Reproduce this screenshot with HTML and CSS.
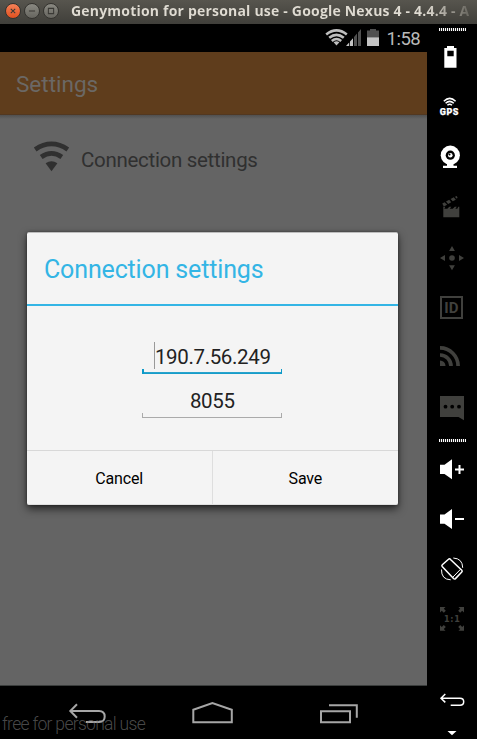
FILE: index.html
```html
<!DOCTYPE html>
<html lang="en">
<head>
<meta charset="utf-8">
<title>Genymotion</title>
<link rel="stylesheet" href="styles.css">
</head>
<body>
<header class="titlebar">
  <span class="win win-close"><svg viewBox="0 0 16 16"><path d="M5.5 5.5l5 5M10.5 5.5l-5 5"/></svg></span>
  <span class="win"><svg viewBox="0 0 16 16"><path d="M4.5 8h7"/></svg></span>
  <span class="win"><svg viewBox="0 0 16 16"><path d="M5 5h6v6H5z"/></svg></span>
  <span class="win-title">Genymotion for personal use - Google Nexus 4 - 4.4.4 - A</span>
</header>
<div class="main">
  <div class="device">
    <div class="status">
      <svg class="st-icons" viewBox="0 0 56 20">
        <g fill="none" stroke="#bebebe" stroke-width="2.6"><path d="M1.2 6.4Q11.5 -1.8 21.8 6.4"/><path d="M4.2 9.8Q11.5 3.8 18.8 9.8"/><path d="M6.8 13Q11.5 9 16.200 13"/></g>
        <path fill="#bebebe" d="M8.600 14.200Q11.500 12.200 14.400 14.200L11.500 17.600z"/>
        <path fill="#c4c4c4" d="M21 18L24.200 14.400V18zM25 13.600L28 10.200V18H25z"/>
        <path fill="#505050" d="M29 9L32 5.400V18H29zM33 4.400L36 1V18H33z"/>
        <path fill="#505050" d="M42 2.400h3V1h6v1.400h3V9.500H42z"/><path fill="#c4c4c4" d="M42 9.300h12V18H42z"/>
      </svg>
      <span class="clock">1:58</span>
    </div>
    <div class="actionbar"><span>Settings</span></div>
    <div class="content">
      <div class="row">
        <svg class="row-icon" viewBox="0 0 38 32"><g fill="none" stroke="#303030" stroke-width="4.800"><path d="M2.200 8.400Q18.500 -2.600 34.800 8.400"/><path d="M8.200 16Q18.500 8.800 28.800 16"/></g><path fill="#303030" d="M12.600 22.300Q18.500 18.300 24.400 22.300L18.500 30.300z"/></svg>
        <span class="row-text">Connection settings</span>
      </div>
      <section class="dialog">
        <h1 class="dlg-title"><span>Connection settings</span></h1>
        <div class="fields">
          <div class="field active"><i class="caret"></i><span>190.7.56.249</span></div>
          <div class="field"><span>8055</span></div>
        </div>
        <div class="buttons"><div class="btn">Cancel</div><div class="btn">Save</div></div>
      </section>
    </div>
    <nav class="nav">
      <svg class="n-back" viewBox="68 0 38 54"><path d="M77 19.3L70.3 26L77 32.7M70.3 26H99Q104.7 26 104.7 31.5Q104.7 37 99 37H86"/></svg>
      <svg class="n-home" viewBox="192 0 42 54"><path d="M193.3 24.8L212.4 18L231.8 24.8V37.3H193.3z"/></svg>
      <svg class="n-recent" viewBox="319 0 40 54"><path d="M321 26.2H350V37.2H321zM329 20.3H356.8V32.7"/></svg>
      <span class="watermark">free for personal use</span>
    </nav>
  </div>
  <aside class="tools">
    <div class="grip first"></div>
    <svg class="tool" viewBox="0 0 50 50"><path fill-rule="evenodd" d="M20 15h7v2h2.5v19.7H17.3V17H20zM20.3 19.7v5.6h6.4v-5.6z"/></svg>
    <svg class="tool" viewBox="0 0 50 50"><g class="line"><path d="M16.8 20.2Q22.7 14.6 28.6 20.2M18.6 22.3Q22.7 18.4 26.8 22.3M20.4 24.3Q22.7 22.2 25 24.3"/></g><text class="gps" x="12.8" y="34">GPS</text></svg>
    <svg class="tool" viewBox="0 0 50 50"><circle cx="23.3" cy="24.2" r="9.6"/><path d="M20 32h6.500v2.700H30v2.200H16v-2.200h4z"/><circle cx="23.300" cy="24.200" r="4.600" fill="#000"/><circle cx="23.300" cy="24.200" r="2.300"/><circle cx="22.500" cy="23.400" r="1" fill="#000"/></svg>
    <svg class="tool off" viewBox="0 0 50 50"><path d="M16.300 25.700h2l-1 2h3l2-2h2l-1.500 2h3l2-2h2l-1.500 2h2l1-2h1v10.600H16.300z"/><path d="M15.300 22.500l2.300-1.200 2.600 2.400-3.400 1.800zM19 20.400l3.200-1.700 2 2.600-3 1.600zM23.600 18l3.200-1.700 2 2.400-3 1.600zM28 15.800l1.800-.9.8 2-1.300.7z"/></svg>
    <svg class="tool off" viewBox="0 0 50 50"><circle cx="25" cy="27" r="2.800"/><path d="M25 15l2.900 5h-5.800zM25 39.300l2.900-5h-5.800zM13 27l5-3v6zM37 27l-5-3v6z"/></svg>
    <svg class="tool off" viewBox="0 0 50 50"><path fill-rule="evenodd" d="M13 15h23v23H13zM15 17v19h19V17z"/><text class="id" x="17.300" y="32.200">ID</text></svg>
    <svg class="tool off" viewBox="0 0 50 50"><g fill="none" stroke="#40403d" stroke-width="3.700"><path d="M13 16.900A18.100 18.100 0 0 1 31.100 35M13 24A11 11 0 0 1 24 35"/></g><path d="M13 29.500A5.500 5.500 0 0 1 18.500 35H13z"/></svg>
    <svg class="tool off" viewBox="0 0 50 50"><path d="M13 15h24v24.300L31.500 36H13z"/><g fill="#000"><circle cx="18.500" cy="25.700" r="1.900"/><circle cx="25.200" cy="25.700" r="1.900"/><circle cx="32" cy="25.700" r="1.900"/></g></svg>
    <div class="grip second"></div>
    <svg class="tool" viewBox="0 0 50 50"><path d="M13 20.700h4.500L25 15.300v20l-7.500-5.300H13zM31.500 21h2v3.500H37v2h-3.500V30h-2v-3.500H28v-2h3.500z"/></svg>
    <svg class="tool" viewBox="0 0 50 50"><path d="M13 20.500h4.500L25 15v20l-7.500-5.300H13zM28 24h9v2h-9z"/></svg>
    <svg class="tool" viewBox="0 0 50 50"><g class="line"><path d="M21.500 15.300Q22.500 14.300 23.500 15.500L34.800 26.300Q35.600 27.200 34.800 28L28.500 34.600Q27.500 35.500 26.500 34.500L15.200 22.500Q14.500 21.500 15.300 20.800z"/><path d="M26 33L33.500 25.300" stroke-width="1"/></g><g class="line thin"><path d="M26.300 14Q35.500 14.500 35.700 23.800M14.500 25.500Q14.200 35.500 23.700 35.800"/></g></svg>
    <svg class="tool off" viewBox="0 0 50 50"><path d="M13 13h5.500l-1.700 1.700 2 2-2 2-2-2L13 18.500zM37 13h-5.500l1.700 1.700-2 2 2 2 2-2 1.800 1.800zM13 36.700h5.500L16.800 35l2-2-2-2-2 2-1.800-1.800zM37 36.700h-5.500l1.700-1.700-2-2 2-2 2 2 1.800-1.800z"/><text class="scale" x="17" y="28">1:1</text></svg>
    <svg class="tool back" viewBox="0 0 50 50"><g class="line"><path d="M18.300 19L14 23.200L18.300 27.400M14 23.200H33Q36.700 23.200 36.700 26.800Q36.700 30.300 33 30.300H23.700"/></g></svg>
    <svg class="more" viewBox="0 0 50 5"><path d="M20.500 0h9L25 4.300z"/></svg>
  </aside>
</div>
</body>
</html>
```

FILE: styles.css
```css
* { box-sizing: border-box; }
body { margin: 0; width: 477px; height: 739px; overflow: hidden; background: #000; font-family: Roboto, sans-serif; }
svg { display: block; flex: none; }
span { white-space: nowrap; }

.titlebar { height: 24px; padding: 0 0 3px 5px; display: flex; align-items: center; gap: 3px; background: linear-gradient(#57554e, #403f3a); overflow: hidden; }
.win { flex: none; width: 16px; height: 16px; border-radius: 50%; background: linear-gradient(#8a8982, #66655f); border: 1px solid #34332f; }
.win svg { width: 14px; height: 14px; fill: none; stroke: #3a3935; stroke-width: 1.2; }
.win-close { background: linear-gradient(#f58158, #e1501f); }
.win-title { flex: none; margin-left: 9px; font: bold 14px/20px "Open Sans", sans-serif; letter-spacing: 0.2px; background: linear-gradient(90deg, #dfdbd2 355px, #57554e 405px); background-clip: text; -webkit-background-clip: text; color: transparent; }

.main { display: flex; height: 715px; }
.device { width: 427px; display: flex; flex-direction: column; }
.status { height: 28px; display: flex; justify-content: flex-end; padding-right: 6.500px; }
.st-icons { width: 56px; height: 20px; margin: 4px 6px 0 0; }
.clock { font-size: 18.500px; line-height: 30px; letter-spacing: -.5px; color: #b9b9b9; width: 34px; }
.actionbar { height: 63px; padding-left: 16px; background: #5f3d1c; border-bottom: 1px solid #523821; color: #6b6865; font-size: 22.500px; line-height: 64px; }
.content { height: 571px; background: linear-gradient(#505050, #646464 4px); border-bottom: 1px solid #3a3d3c; }
.row { height: 117px; display: flex; padding-left: 33px; }
.row-icon { width: 38px; height: 32px; margin-top: 26px; }
.row-text { margin-left: 10px; font-size: 20.500px; letter-spacing: -.3px; line-height: 91px; color: #303030; }

.dialog { width: 371.500px; height: 273px; margin-left: 26.500px; display: flex; flex-direction: column; background: #f4f4f4; border-radius: 2px; border: solid #e0e0e0; border-width: 1px 0; border-top-color: #bdbdbd; box-shadow: 0 4px 9px rgba(0,0,0,.62), 0 0 3px rgba(0,0,0,.4); }
.dlg-title { margin: 0; height: 73px; padding-left: 17.500px; border-bottom: 2px solid #33b5e5; font-weight: 400; font-size: 25px; letter-spacing: -.15px; line-height: 74px; color: #33b5e5; }
.fields { flex: none; height: 144px; padding-top: 35px; display: flex; flex-direction: column; align-items: center; gap: 11px; }
.field { width: 140px; height: 33px; display: flex; justify-content: center; font-size: 20.500px; letter-spacing: -.35px; line-height: 33px; color: #222; background: linear-gradient(#aaa, #aaa) 0 100%/1px 5px no-repeat, linear-gradient(#aaa, #aaa) 100% 100%/1px 5px no-repeat, linear-gradient(#aaa, #aaa) 0 100%/100% 1px no-repeat; }
.field.active { background: linear-gradient(#0c9ac9, #0c9ac9) 0 100%/2px 5px no-repeat, linear-gradient(#0c9ac9, #0c9ac9) 100% 100%/1px 5px no-repeat, linear-gradient(#33a5cc, #0c9ac9) 0 100%/100% 2px no-repeat; }
.caret { width: 1px; height: 27px; margin-top: 1px; background: #999; }
.buttons { flex: 1; min-height: 0; display: flex; border-top: 1px solid #d8d8d8; }
.btn { flex: 1; height: 53px; text-align: center; font-size: 16px; letter-spacing: -.15px; line-height: 56px; color: #000; }
.btn + .btn { border-left: 1px solid #dedede; }

.nav { position: relative; height: 53px; display: flex; padding-left: 68px; }
.nav svg { height: 54px; margin-top: -1px; fill: none; stroke: #a6a6a6; stroke-width: 2; }
.n-back { width: 38px; }
.nav .n-home { width: 42px; margin-left: 86px; }
.nav .n-recent { width: 40px; margin-left: 85px; }
.watermark { position: absolute; left: 2px; top: 28px; font-size: 17.500px; letter-spacing: -.7px; line-height: 20px; font-weight: 300; color: rgba(120,120,120,.62); }

.tools { width: 50px; display: flex; flex-direction: column; fill: #fff; }
.grip { flex: none; width: 27px; height: 3px; margin-left: 12px; background: repeating-linear-gradient(90deg, #fff 0 1px, #222 1px 2px); }
.first { margin-top: 4px; }
.second { margin: 8px 0 2px 12px; }
.tool { width: 50px; height: 50px; }
.off { fill: #40403d; }
.line { fill: none; stroke: #fff; stroke-width: 1.500; }
.thin { stroke-width: 1; }
.gps { font: 900 9px Roboto, sans-serif; letter-spacing: .5px; stroke: #fff; stroke-width: .25; }
.id { font: bold 15px Roboto, sans-serif; }
.scale { font: bold 8px "DejaVu Sans", sans-serif; letter-spacing: .8px; }
.back { margin-top: 31px; }
.more { width: 50px; height: 5px; margin-top: 6px; }
```
